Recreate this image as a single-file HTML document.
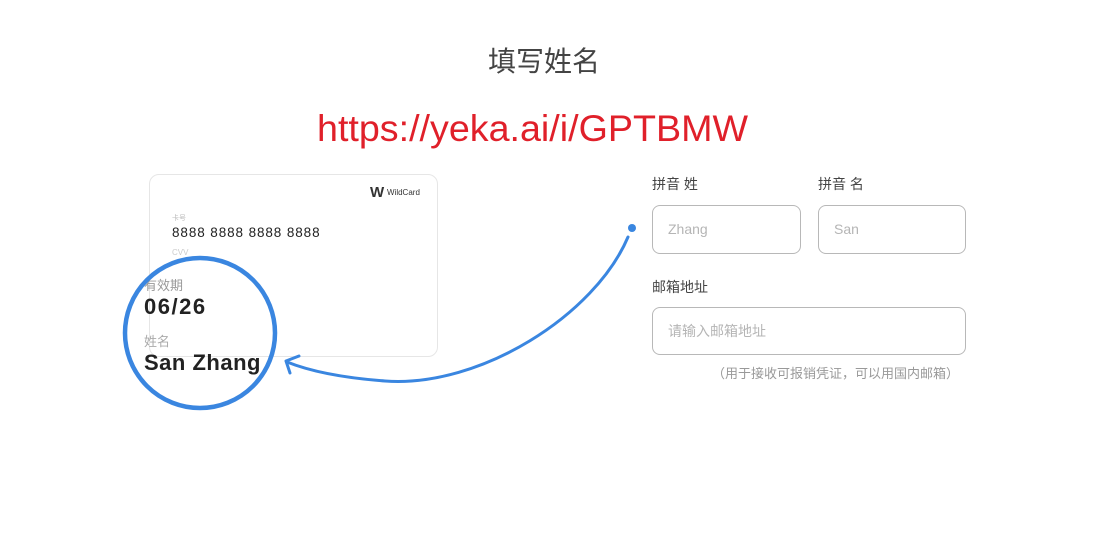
<!DOCTYPE html>
<html><head><meta charset="utf-8"><style>
body{margin:0;width:1103px;height:548px;background:#fff;overflow:hidden;position:relative;font-family:"Liberation Sans","Noto Sans CJK SC",sans-serif}
.a{position:absolute;white-space:nowrap}
.card{position:absolute;left:149px;top:174px;width:289px;height:183px;border:1.5px solid #e6e6e6;border-radius:10px;box-sizing:border-box}
.inp{position:absolute;border:1.5px solid #b8b8b8;border-radius:8px;box-sizing:border-box;color:#b5b5b5;font-size:14px;padding-left:15px;line-height:46px}
.lbl{font-size:14px;color:#444}
</style></head><body>
<svg width="1103" height="548" style="position:absolute;left:0;top:0">
<text x="544" y="71" text-anchor="middle" font-size="28" fill="#444" font-family="Liberation Sans,Noto Sans CJK SC,sans-serif">填写姓名</text>
<text x="317" y="141" font-size="37" fill="#e0202a" textLength="431" lengthAdjust="spacingAndGlyphs" font-family="Liberation Sans,sans-serif">https://yeka.ai/i/GPTBMW</text>
</svg>
<div class="card"></div>
<div class="a" style="left:370px;top:184px;font-size:15px;font-weight:bold;color:#333">W</div>
<div class="a" style="left:387px;top:188px;font-size:8px;color:#333">WildCard</div>
<div class="a" style="left:172px;top:213px;font-size:7px;color:#bbb">卡号</div>
<div class="a" style="left:172px;top:225px;font-size:13.5px;color:#222;letter-spacing:0.9px">8888 8888 8888 8888</div>
<div class="a" style="left:172px;top:248px;font-size:8px;color:#ccc">CVV</div>
<div class="a" style="left:144px;top:275px;font-size:13px;color:#999">有效期</div>
<div class="a" style="left:144px;top:294px;font-size:22px;color:#222;letter-spacing:1.5px;font-weight:bold">06/26</div>
<div class="a" style="left:144px;top:331px;font-size:13px;color:#aaa">姓名</div>
<div class="a" style="left:144px;top:350px;font-size:22px;color:#222;letter-spacing:0.5px;font-weight:bold">San Zhang</div>
<svg width="1103" height="548" style="position:absolute;left:0;top:0">
<circle cx="200" cy="333" r="75" fill="none" stroke="#3a86e0" stroke-width="4.5"/>
<circle cx="632" cy="228" r="4" fill="#3a86e0"/>
<path d="M628,237 C595,315 480,388 385,381 C345,378 312,372 287,362" fill="none" stroke="#3a86e0" stroke-width="3" stroke-linecap="round"/>
<path d="M299,356 L286,361 L290,373" fill="none" stroke="#3a86e0" stroke-width="3" stroke-linecap="round" stroke-linejoin="round"/>
</svg>
<div class="a lbl" style="left:652px;top:174px">拼音 姓</div>
<div class="a lbl" style="left:818px;top:174px">拼音 名</div>
<div class="inp" style="left:652px;top:205px;width:149px;height:49px">Zhang</div>
<div class="inp" style="left:818px;top:205px;width:148px;height:49px">San</div>
<div class="a lbl" style="left:652px;top:277px">邮箱地址</div>
<div class="inp" style="left:652px;top:307px;width:314px;height:48px">请输入邮箱地址</div>
<div class="a" style="left:712px;top:363px;font-size:13px;color:#999">（用于接收可报销凭证，可以用国内邮箱）</div>
</body></html>
